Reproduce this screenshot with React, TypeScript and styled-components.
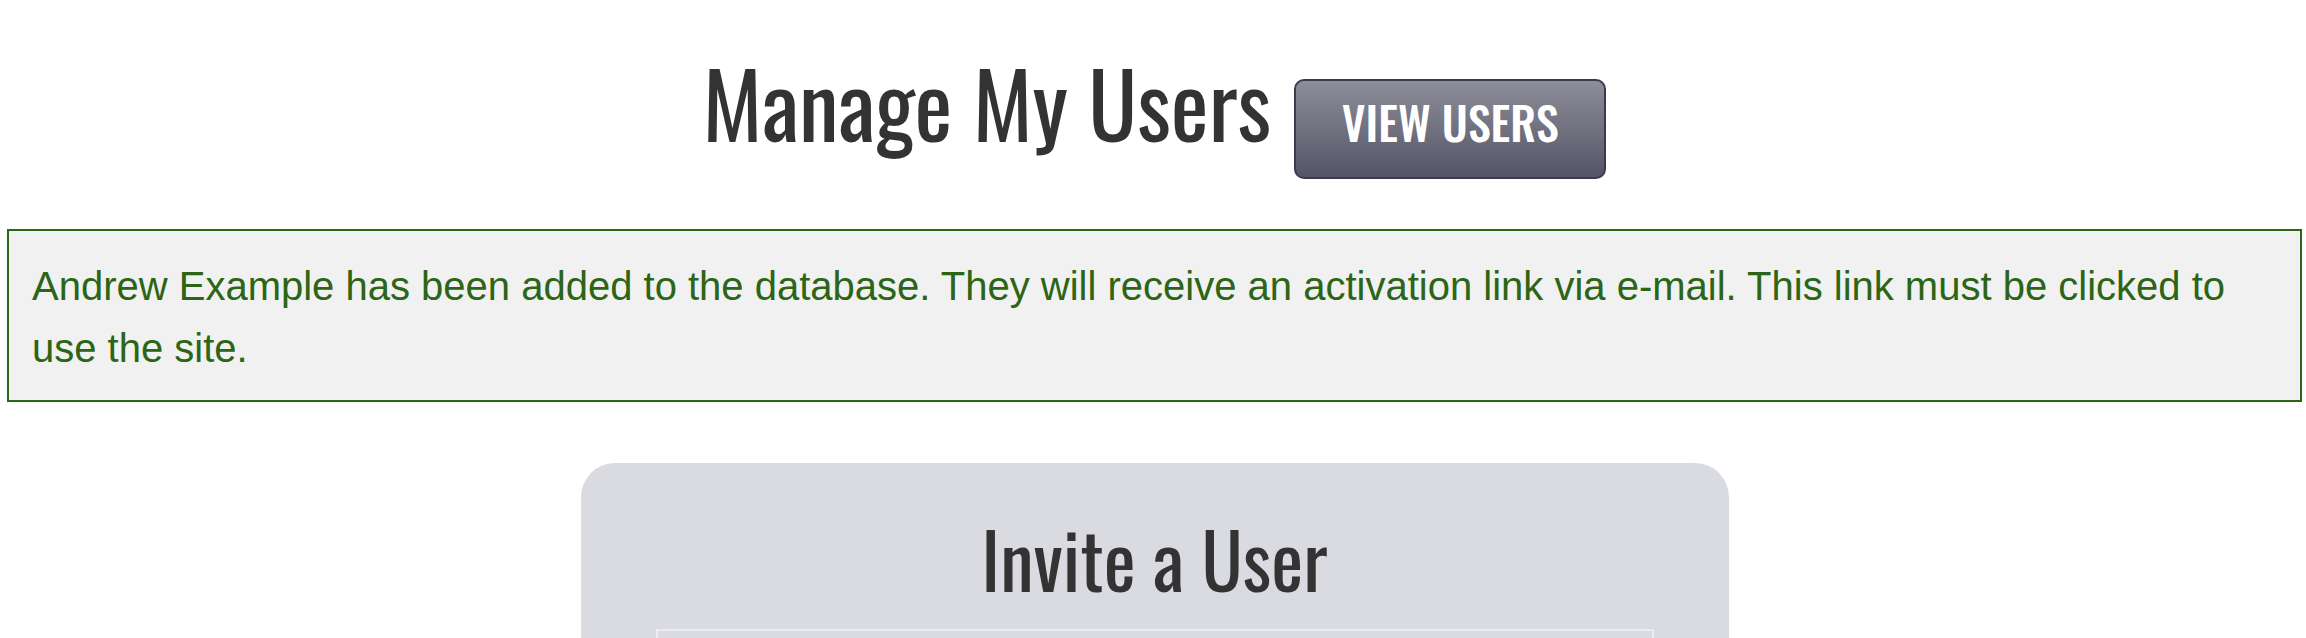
import * as React from 'react'
import styled, { createGlobalStyle } from 'styled-components'

const GlobalStyle = createGlobalStyle`
    body {
        margin: 0;
        background: #fff;
        font-family: "Liberation Sans", Arial, sans-serif;
    }
`;

const App: React.FC = () => {
    return (
        <>
            <GlobalStyle />
            <Page>
                <Header>
                    <Title>Manage My Users</Title>
                    <ViewButton type="button">View Users</ViewButton>
                </Header>

                <Notice>
                    Andrew Example has been added to the database. They will receive an activation link via e-mail. This link must be clicked to use the site.
                </Notice>

                <Card>
                    <CardTitle>Invite a User</CardTitle>
                    <FormBox />
                </Card>
            </Page>
        </>
    )
}

const Page = styled.div`
    display: flex;
    flex-direction: column;
    padding: 0 4px 0 7px;
`;

const Header = styled.div`
    display: flex;
    justify-content: center;
    align-items: baseline;
    gap: 23px;
    padding-top: 57px;
`;

const Title = styled.h1`
    margin: 0;
    font-family: "Oswald", "Liberation Sans Narrow", sans-serif;
    font-weight: 400;
    font-size: 90px;
    line-height: 1;
    color: #333;
`;

const ViewButton = styled.button`
    box-sizing: border-box;
    width: 312px;
    height: 100px;
    padding: 0 0 15px;
    border: 2px solid #3a3a50;
    border-radius: 10px;
    background: linear-gradient(to bottom, #8d8e98 0%, #545467 100%);
    color: #fff;
    font-family: "Oswald", "Liberation Sans Narrow", sans-serif;
    font-weight: 500;
    font-size: 46px;
    line-height: 40px;
    text-transform: uppercase;
    cursor: pointer;
`;

const Notice = styled.div`
    margin-top: 50px;
    padding: 24px 23px 21px;
    border: 2px solid #2e6619;
    background: #f1f1f1;
    color: #2b6515;
    font-size: 40px;
    line-height: 62px;
`;

const Card = styled.section`
    align-self: center;
    box-sizing: border-box;
    width: 1148px;
    margin-top: 61px;
    padding: 57px 75px 0;
    border-radius: 34px;
    background: #dadbe0;
`;

const CardTitle = styled.h2`
    margin: 0 0 33px;
    text-align: center;
    font-family: "Oswald", "Liberation Sans Narrow", sans-serif;
    font-weight: 400;
    font-size: 76px;
    line-height: 1;
    color: #333;
`;

const FormBox = styled.div`
    min-height: 220px;
    border: 2px solid #ececee;
`;

export default App;
